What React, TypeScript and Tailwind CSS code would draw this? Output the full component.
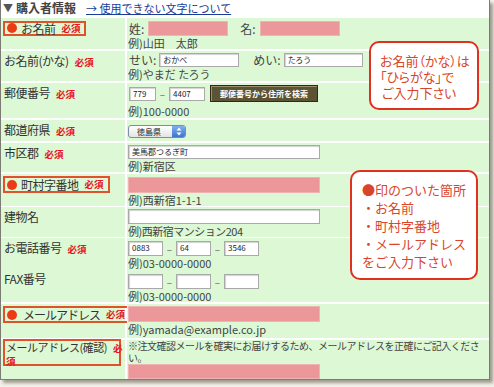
import React from 'react';

function Req() {
  return <span className="ml-[6px] text-[9.5px] font-bold tracking-normal text-[#e8141c]">必須</span>;
}

function Dot() {
  return <span className="inline-block shrink-0 w-[10px] h-[10px] rounded-full bg-[#ec3b14] mr-[4px]" />;
}

function Field({ className, text }: { className: string; text?: string }) {
  return (
    <div
      className={`h-[14px] bg-white border border-[#a9a9a9] shadow-[inset_1px_1px_1px_rgba(0,0,0,0.18)] pl-[3px] text-[8px] leading-[12px] text-[#222] overflow-hidden ${className}`}
    >
      {text}
    </div>
  );
}

function Pink({ className }: { className: string }) {
  return <div className={`h-[15px] bg-[#ec979a] border border-[#efb3b3] ${className}`} />;
}

function Example({ children, className = '' }: { children: React.ReactNode; className?: string }) {
  return <div className={`text-[11px] leading-[12px] text-[#444] whitespace-nowrap ${className}`}>{children}</div>;
}

function Dash() {
  return <span className="w-[13px] text-center text-[10px] leading-[12px] text-[#666]">–</span>;
}

interface RowProps {
  h: string;
  label: React.ReactNode;
  children: React.ReactNode;
  right?: string;
}

function Row({ h, label, children, right = 'pt-[2px]' }: RowProps) {
  return (
    <div className={`grid grid-cols-[124px_1fr] gap-x-[2px] ${h}`}>
      <div className="bg-[#ddf8d5] pl-[3px] pt-[2px] text-[12px] leading-[15px] tracking-[-0.5px] text-[#333] whitespace-nowrap">
        {label}
      </div>
      <div className={`bg-[#ddf8d5] pl-[1px] flex flex-col ${right}`}>{children}</div>
    </div>
  );
}

export default function App() {
  return (
    <div className="relative w-[494px] h-[387px] bg-[#f2f1ea] overflow-hidden font-['Noto_Sans_CJK_JP',sans-serif]">
      <div className="w-[490px] h-[380px] bg-white border-x border-b border-[#7c7c74] shadow-[3px_3px_3px_rgba(60,50,30,0.45)] flex flex-col">
        <div className="h-[19px] flex items-start pl-[2px] pt-[1px] leading-[14px] whitespace-nowrap">
          <span className="text-[10px] text-[#555]">▼</span>
          <span className="ml-[3px] text-[12px] font-bold text-[#444]">購入者情報</span>
          <span className="ml-[10px] text-[11px] text-[#1c3b96] underline">→ 使用できない文字について</span>
        </div>

        <div className="flex-1 flex flex-col gap-[2px] bg-white">
          <Row
            h="h-[31px]"
            right="pt-[3px]"
            label={
              <div className="inline-flex items-center h-[15px] border-2 border-[#e0532a] pl-[2px] pr-[3px] ml-[-1px]">
                <Dot />
                お名前
                <Req />
              </div>
            }
          >
            <div className="flex items-center text-[12px] leading-[14px] text-[#444]">
              <span className="ml-[1px]">姓:</span>
              <Pink className="ml-[4px] w-[80px]" />
              <span className="ml-[12px]">名:</span>
              <Pink className="ml-[4px] w-[80px] bg-[#e9a196]" />
            </div>
            <Example className="mt-[1px]">例)山田　太郎</Example>
          </Row>

          <Row
            h="h-[30px]"
            label={
              <>
                お名前(かな)
                <Req />
              </>
            }
          >
            <div className="flex items-center text-[12px] leading-[14px] text-[#444]">
              <span className="ml-[1px]">せい:</span>
              <Field className="ml-[3px] w-[80px]" text="おかべ" />
              <span className="ml-[14px]">めい:</span>
              <Field className="ml-[3px] w-[79px]" text="たろう" />
            </div>
            <Example className="mt-[1px]">例)やまだ たろう</Example>
          </Row>

          <Row
            h="h-[35px]"
            right="pt-[2px]"
            label={
              <>
                郵便番号
                <Req />
              </>
            }
          >
            <div className="flex items-center">
              <Field className="ml-[1px] w-[27px]" text="779" />
              <Dash />
              <Field className="w-[36px]" text="4407" />
              <div className="ml-[5px] w-[108px] h-[17px] bg-[#5b5334] border border-[#2f2a18] shadow-[inset_1px_1px_0_#9a9070] flex items-center justify-center text-[8px] leading-[10px] font-bold text-white whitespace-nowrap">
                郵便番号から住所を検索
              </div>
            </div>
            <Example className="mt-[3px]">例)100-0000</Example>
          </Row>

          <Row
            h="h-[21px]"
            right="pt-[5px]"
            label={
              <>
                都道府県
                <Req />
              </>
            }
          >
            <div className="w-[58px] h-[13px] rounded-[3px] border border-[#7d8ba6] bg-gradient-to-b from-white to-[#e4e4e4] flex items-center overflow-hidden">
              <span className="flex-1 pl-[8px] text-[8px] leading-[10px] text-[#222]">徳島県</span>
              <span className="w-[13px] h-full bg-gradient-to-b from-[#7fb0f0] to-[#3f74d0] flex items-center justify-center">
                <svg width="6" height="9" viewBox="0 0 6 9">
                  <path d="M3 0.5L5.5 3.5H0.5Z M3 8.5L5.5 5.5H0.5Z" fill="white" />
                </svg>
              </span>
            </div>
          </Row>

          <Row
            h="h-[29px]"
            label={
              <>
                市区郡
                <Req />
              </>
            }
          >
            <Field className="w-[192px]" text="美馬郡つるぎ町" />
            <Example className="mt-[1px]">例)新宿区</Example>
          </Row>

          <Row
            h="h-[31px]"
            right="pt-[3px]"
            label={
              <div className="inline-flex items-center h-[17px] border-2 border-[#e0532a] pl-[2px] pr-[4px] ml-[-1px]">
                <Dot />
                町村字番地
                <Req />
              </div>
            }
          >
            <Pink className="w-[192px] h-[16px]" />
            <Example className="mt-[1px]">例)西新宿1-1-1</Example>
          </Row>

          <Row h="h-[29px]" label={<>建物名</>}>
            <Field className="w-[192px] h-[15px]" />
            <Example className="mt-[1px] tracking-[-0.5px]">例)西新宿マンション204</Example>
          </Row>

          <Row
            h="h-[29px]"
            right="pt-[3px]"
            label={
              <>
                お電話番号
                <Req />
              </>
            }
          >
            <div className="flex items-center">
              <Field className="w-[35px] h-[15px]" text="0883" />
              <Dash />
              <Field className="w-[35px] h-[15px]" text="64" />
              <Dash />
              <Field className="w-[35px] h-[15px]" text="3546" />
            </div>
            <Example className="mt-[1px]">例)03-0000-0000</Example>
          </Row>

          <Row h="h-[33px]" right="pt-[5px]" label={<>FAX番号</>}>
            <div className="flex items-center">
              <Field className="w-[35px] h-[15px]" />
              <Dash />
              <Field className="w-[35px] h-[15px]" />
              <Dash />
              <Field className="w-[35px] h-[15px]" />
            </div>
            <Example className="mt-[1px]">例)03-0000-0000</Example>
          </Row>

          <Row
            h="h-[34px]"
            label={
              <div className="inline-flex items-center h-[17px] border-2 border-[#e0532a] pl-[2px] pr-[4px] ml-[-1px]">
                <Dot />
                <span className="ml-[2px] tracking-[-1px]">メールアドレス</span>
                <Req />
              </div>
            }
          >
            <Pink className="w-[192px] h-[16px]" />
            <Example className="mt-[1px]">例)yamada@example.co.jp</Example>
          </Row>

          <div className="grid grid-cols-[124px_1fr] gap-x-[2px] flex-1">
            <div className="bg-[#ddf8d5] pl-[2px]">
              <div className="w-[118px] h-[27px] mt-[-1px] border-2 border-[#e0532a] pl-[1px] text-[12px] leading-[12px] text-[#333] whitespace-nowrap">
                <span className="text-[11px] tracking-[-0.5px]">メールアドレス(確認)</span>
                <span className="ml-[6px] text-[9.5px] font-bold text-[#e8141c]">必</span>
                <br />
                <span className="text-[9.5px] font-bold text-[#e8141c]">須</span>
              </div>
            </div>
            <div className="bg-[#ddf8d5] pl-[1px] flex flex-col">
              <div className="text-[10px] leading-[12px] text-[#444] whitespace-nowrap tracking-[-0.5px]">
                ※注文確認メールを確実にお届けするため、メールアドレスを正確にご記入くださ
                <br />
                い。
              </div>
              <Pink className="w-[192px] h-[14px]" />
            </div>
          </div>
        </div>
      </div>

      <div className="absolute left-[369px] top-[41px] w-[110px] h-[69px] bg-white border-2 border-[#e03020] rounded-[10px] pl-[9px] pt-[10px] text-[13px] leading-[16px] text-[#d9452a] [font-feature-settings:'palt']">
        <div>お名前（かな）は</div>
        <div>「ひらがな」で</div>
        <div className="pl-[2px]">ご入力下さい</div>
      </div>

      <div className="absolute left-[350px] top-[170px] w-[128px] h-[110px] bg-white border-2 border-[#e03020] rounded-[10px] pl-[10px] pt-[9px] text-[13px] leading-[18px] text-[#d9452a]">
        <div>●印のついた箇所</div>
        <div>・お名前</div>
        <div>・町村字番地</div>
        <div>・メールアドレス</div>
        <div>をご入力下さい</div>
      </div>
    </div>
  );
}
